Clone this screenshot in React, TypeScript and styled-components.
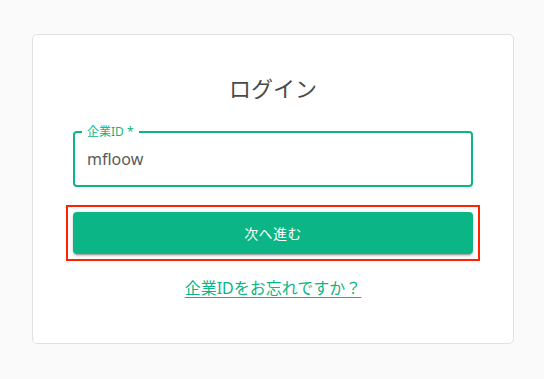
import styled, { createGlobalStyle } from 'styled-components'

const GREEN = '#0bb585'
const FONT = `"Noto Sans", "Noto Sans CJK JP", sans-serif`

const GlobalStyle = createGlobalStyle`
  html, body {
    margin: 0;
    padding: 0;
    background: #fafafa;
    font-family: ${FONT};
  }
`

export default function App() {
  return (
    <>
      <GlobalStyle />
      <Page>
        <Card>
          <Title>ログイン</Title>

          <Field>
            <FieldLabel>企業ID *</FieldLabel>
            <FieldInput defaultValue="mfloow" />
          </Field>

          <Highlight>
            <NextButton type="button">次へ進む</NextButton>
          </Highlight>

          <ForgotLink href="#">企業IDをお忘れですか？</ForgotLink>
        </Card>
      </Page>
    </>
  )
}

const Page = styled.div`
  display: flex;
  justify-content: center;
  padding: 34px 0 0 2px;
`

const Card = styled.div`
  width: 400px;
  padding: 35px 40px 43px;
  background: #fff;
  border: 1px solid #e0e0e0;
  border-radius: 5px;
  display: flex;
  flex-direction: column;
  align-items: stretch;
`

const Title = styled.h1`
  margin: 0 0 25px;
  font-size: 22px;
  font-weight: 400;
  line-height: 36px;
  text-align: center;
  color: #4a4a4a;
`

const Field = styled.div`
  position: relative;
  height: 56px;
  box-sizing: border-box;
  border: 2px solid ${GREEN};
  border-radius: 4px;
`

const FieldLabel = styled.span`
  position: absolute;
  left: 7px;
  top: -9px;
  padding: 0 5px;
  background: #fff;
  font-size: 12px;
  line-height: 16px;
  color: ${GREEN};
`

const FieldInput = styled.input`
  display: block;
  width: 100%;
  height: 100%;
  box-sizing: border-box;
  padding: 0 12px;
  border: none;
  outline: none;
  background: transparent;
  font-family: ${FONT};
  font-size: 16px;
  color: #5a5a5a;
`

const Highlight = styled.div`
  margin: 18px -7px 0;
  padding: 5px;
  border: 2px solid #ff2200;
  display: flex;
  flex-direction: column;
`

const NextButton = styled.button`
  height: 42px;
  border: none;
  border-radius: 4px;
  background: ${GREEN};
  color: #fff;
  font-family: ${FONT};
  font-size: 14px;
  letter-spacing: 0.03em;
  box-shadow: 0 3px 1px -2px rgba(0, 0, 0, 0.2), 0 2px 2px 0 rgba(0, 0, 0, 0.14),
    0 1px 5px 0 rgba(0, 0, 0, 0.12);
  cursor: pointer;
`

const ForgotLink = styled.a`
  margin-top: 15px;
  align-self: center;
  font-size: 16px;
  line-height: 24px;
  color: ${GREEN};
  text-decoration: underline;
  text-underline-offset: 3px;
`
